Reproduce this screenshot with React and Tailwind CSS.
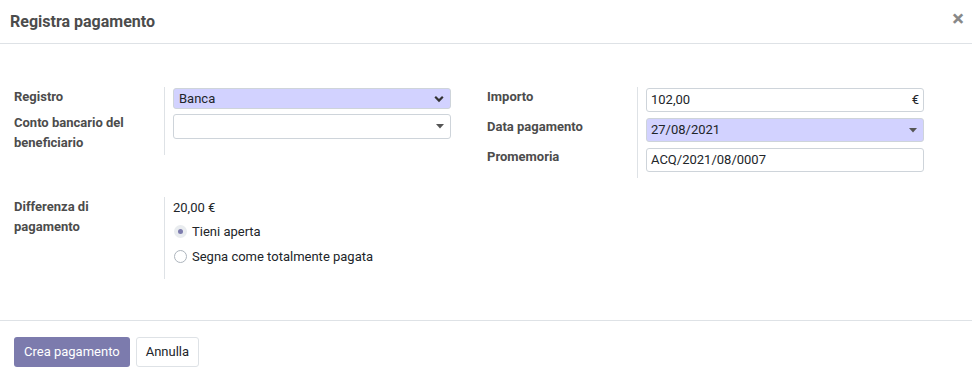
import { useState } from 'react'

const Caret = () => (
  <svg width="8" height="5" viewBox="0 0 8 5" className="shrink-0">
    <path d="M0 0h8L4 4.5z" fill="#555" />
  </svg>
)

const Chevron = () => (
  <svg width="10" height="8" viewBox="0 0 10 8" className="shrink-0">
    <path d="M1.2 1.8L5 5.6 8.8 1.8" fill="none" stroke="#333" strokeWidth="2.2" />
  </svg>
)

function Radio({ checked, label, onClick }) {
  return (
    <button onClick={onClick} className="flex items-center h-[25px] gap-[5px] text-left">
      {checked ? (
        <span className="w-[13px] h-[13px] rounded-full bg-[#e9ecef] flex items-center justify-center">
          <span className="w-[5px] h-[5px] rounded-full bg-[#7c7bad]" />
        </span>
      ) : (
        <span className="w-[13px] h-[13px] rounded-full bg-white border border-[#adb5bd]" />
      )}
      <span>{label}</span>
    </button>
  )
}

export default function App() {
  const [keep, setKeep] = useState(true)

  const label = 'font-bold text-[#4c4c4c] leading-5'
  const cell = 'border-l border-[#dee2e6] pl-2'

  return (
    <div className="w-[972px] h-[373px] overflow-hidden bg-white text-[13px] text-[#212529]" style={{ fontFamily: 'Roboto, "Liberation Sans", sans-serif' }}>
      {/* Header */}
      <div className="h-[44px] border-b border-[#dee2e6] flex items-center justify-between pl-[10px] pr-[8px]">
        <h4 className="text-[16px] font-bold text-[#4c4c4c]">Registra pagamento</h4>
        <button className="text-[#888] font-bold text-[22px] leading-none -mt-[5px]">×</button>
      </div>

      {/* Body */}
      <div className="px-[14px] pt-[43px] h-[276px]">
        <div className="flex items-start gap-[36px]">
          {/* Left group */}
          <div className="w-[437px] grid grid-cols-[150px_1fr]">
            <div className={label}>Registro</div>
            <div className={`${cell} pt-px h-[26px]`}>
              <div className="h-[21px] rounded-[3px] border border-[#ced4da] bg-[#d2d2ff] flex items-center justify-between pl-[5px] pr-[6px]">
                <span>Banca</span>
                <Chevron />
              </div>
            </div>
            <div className={`${label} pr-4 pb-[2px]`}>Conto bancario del beneficiario</div>
            <div className={`${cell} pt-px`}>
              <div className="h-[25px] rounded-[3px] border border-[#ced4da] bg-white flex items-center justify-end pr-[6px]">
                <Caret />
              </div>
            </div>
          </div>

          {/* Right group */}
          <div className="w-[437px] grid grid-cols-[150px_1fr]">
            <div className={label}>Importo</div>
            <div className={`${cell} pt-px h-[30px]`}>
              <div className="h-[24px] rounded-[3px] border border-[#ced4da] bg-white flex items-center justify-between px-[4px]">
                <span>102,00</span>
                <span>€</span>
              </div>
            </div>
            <div className={label}>Data pagamento</div>
            <div className={`${cell} pt-px h-[30px]`}>
              <div className="h-[24px] rounded-[3px] border border-[#ced4da] bg-[#d2d2ff] flex items-center justify-between pl-[4px] pr-[6px]">
                <span>27/08/2021</span>
                <Caret />
              </div>
            </div>
            <div className={label}>Promemoria</div>
            <div className={`${cell} pt-px h-[31px]`}>
              <div className="h-[24px] rounded-[3px] border border-[#ced4da] bg-white flex items-center px-[4px]">
                <span>ACQ/2021/08/0007</span>
              </div>
            </div>
          </div>
        </div>

        {/* Payment difference */}
        <div className="w-[437px] grid grid-cols-[150px_1fr] mt-[19px]">
          <div className={`${label} pr-4`}>Differenza di pagamento</div>
          <div className={`${cell} pb-[10px] pt-px`}>
            <div className="leading-5 h-[21px]">20,00 €</div>
            <div className="pl-px">
              <Radio checked={keep} label="Tieni aperta" onClick={() => setKeep(true)} />
              <Radio checked={!keep} label="Segna come totalmente pagata" onClick={() => setKeep(false)} />
            </div>
          </div>
        </div>
      </div>

      {/* Footer */}
      <div className="border-t border-[#dee2e6] px-[14px] pt-4 flex gap-[6px]">
        <button className="h-[30px] px-[10px] rounded-[3px] bg-[#7c7bad] text-white text-[13px]">Crea pagamento</button>
        <button className="h-[30px] px-[9px] rounded-[3px] bg-white border border-[#dee2e6] text-[#212529] text-[13px]">Annulla</button>
      </div>
    </div>
  )
}
